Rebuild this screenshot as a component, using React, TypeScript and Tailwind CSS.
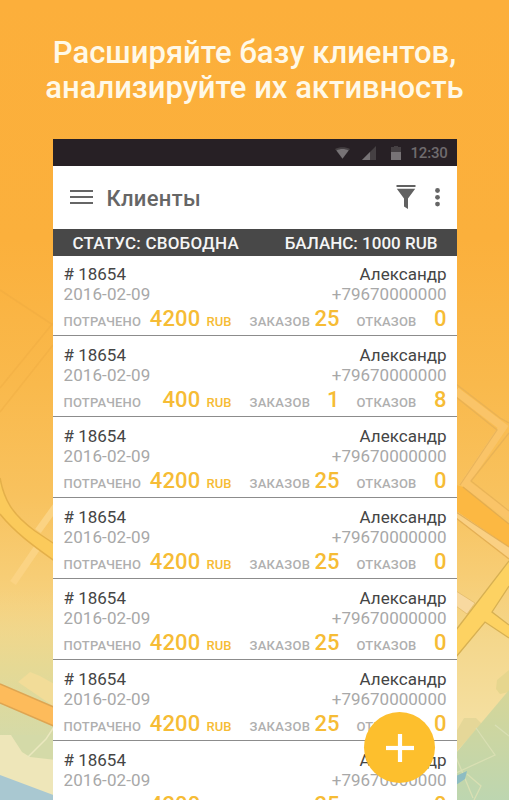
import { Plus } from 'lucide-react';

const clients = [
  { id: 1, number: '18654', date: '2016-02-09', name: 'Александр', phone: '+79670000000', spent: 4200, orders: 25, refusals: 0 },
  { id: 2, number: '18654', date: '2016-02-09', name: 'Александр', phone: '+79670000000', spent: 400, orders: 1, refusals: 8 },
  { id: 3, number: '18654', date: '2016-02-09', name: 'Александр', phone: '+79670000000', spent: 4200, orders: 25, refusals: 0 },
  { id: 4, number: '18654', date: '2016-02-09', name: 'Александр', phone: '+79670000000', spent: 4200, orders: 25, refusals: 0 },
  { id: 5, number: '18654', date: '2016-02-09', name: 'Александр', phone: '+79670000000', spent: 4200, orders: 25, refusals: 0 },
  { id: 6, number: '18654', date: '2016-02-09', name: 'Александр', phone: '+79670000000', spent: 4200, orders: 25, refusals: 0 },
  { id: 7, number: '18654', date: '2016-02-09', name: 'Александр', phone: '+79670000000', spent: 4200, orders: 25, refusals: 0 },
];

function MapBackground() {
  return (
    <svg className="absolute inset-0" width="509" height="800" viewBox="0 0 509 800" fill="none">
      <defs>
        <linearGradient id="sky" x1="0" y1="0" x2="0" y2="1">
          <stop offset="0" stopColor="#fcaf3b" />
          <stop offset="0.3" stopColor="#fbb03c" />
          <stop offset="0.48" stopColor="#f9b94c" />
          <stop offset="0.62" stopColor="#f8c25e" />
          <stop offset="0.72" stopColor="#f7cd75" />
          <stop offset="0.8" stopColor="#f4d78c" />
          <stop offset="0.9" stopColor="#f4dfa0" />
          <stop offset="1" stopColor="#f0e3b0" />
        </linearGradient>
        <linearGradient id="meadow" x1="0" y1="0" x2="0" y2="1">
          <stop offset="0" stopColor="#f3d586" stopOpacity="0" />
          <stop offset="0.5" stopColor="#e6d994" />
          <stop offset="1" stopColor="#d4daa8" />
        </linearGradient>
        <linearGradient id="park" x1="0" y1="0" x2="0" y2="1">
          <stop offset="0" stopColor="#d6d698" />
          <stop offset="1" stopColor="#bdd6b0" />
        </linearGradient>
      </defs>
      <rect width="509" height="800" fill="url(#sky)" />

      {/* left side */}
      <path d="M0 290L53 325M0 388L53 323M0 412L53 345" stroke="#e9a63e" strokeOpacity="0.3" strokeWidth="1.5" />
      <rect y="590" width="56" height="150" fill="url(#meadow)" />
      <rect y="735" width="56" height="65" fill="#d4daa8" />
      <path d="M56 506L38 531M37 548L13 583" stroke="#fbd383" strokeWidth="7" />
      <path d="M0 478C4 500 12 514 35 531L56 545V562C38 549 16 534 0 514Z" fill="#fbca5b" />
      <path d="M0 478C4 500 12 514 35 531L56 545M56 562C38 549 16 534 0 514" stroke="#e4b04a" strokeWidth="1.5" />
      <path d="M18 682L30 672L40 676L56 685V708Z" fill="#f2dc98" />
      <path d="M0 684L56 708V727L0 703Z" fill="#fdbb5b" />
      <path d="M0 684L56 708M56 727L0 703" stroke="#dea552" strokeWidth="1.5" />
      <path d="M0 735L11 735L22 752L30 757L56 760V800H0Z" fill="#eee6b9" />
      <path d="M56 724L46 739L28 757" stroke="#ebe8bf" strokeWidth="1.5" />
      <path d="M0 775L56 796V800H0Z" fill="#a9c8d1" />

      {/* right side */}
      <path d="M456 391L503 427L465 483L509 516" stroke="#fac468" strokeWidth="8" />
      <path d="M456 384L500 418L509 423M456 397L497 430L460 485M509 433L471 481L509 511" stroke="#e3ae55" strokeOpacity="0.7" strokeWidth="1.3" />
      <path d="M456 485L463 487L509 524V547L456 511Z" fill="#fcb842" />
      <path d="M456 511L509 547V558L456 518Z" fill="#fad083" />
      <path d="M463 487L509 524M456 512L509 547M456 518L509 559" stroke="#dfa94f" strokeOpacity="0.8" strokeWidth="1.3" />
      <path d="M456 591L475 603L467 614L456 606Z" fill="#f8d9a0" stroke="#e0b866" strokeOpacity="0.7" />
      <path d="M509 561L456 630V657L485 622L509 638V625L492 612L509 586Z" fill="#fdd262" />
      <path d="M509 561L456 630M456 657L485 622L509 638M509 625L492 612L509 586" stroke="#d7b052" strokeWidth="1.3" />
      <path d="M509 670L497 680L496 689L500 694L509 692Z" fill="#e6d68e" />
      <path d="M456 732L464 718H476L482 724L456 752Z" fill="#e5d798" />
      <path d="M509 690L456 753V800H509Z" fill="url(#park)" />
      <path d="M476 728L495 755L456 773M495 725L509 736M456 757L473 798M467 774L481 786L474 800" stroke="#d9dfb3" strokeWidth="1.3" />
      <path d="M456 776L467 771L465 779L456 785Z" fill="#8dbcc2" />
    </svg>
  );
}

function StatusIcons() {
  return (
    <svg width="68" height="16" viewBox="0 0 68 16">
      <path d="M1 4C5 1.5 12 1.5 16 4L8.500 14Z" fill="#454043" />
      <path d="M2.500 5.500C6 3.500 11 3.500 14.500 5.500L8.500 13.500Z" fill="#777376" />
      <path d="M28 15H42V1Z" fill="#454043" />
      <path d="M28 15H36V7Z" fill="#777376" />
      <path d="M57 2H60V1H64V2H67V15H57Z" fill="#454043" />
      <path d="M57 7H67V15H57Z" fill="#777376" />
    </svg>
  );
}

function FilterIcon() {
  return (
    <svg width="20" height="25" viewBox="0 0 20 25" fill="#616161">
      <path d="M0.500 0H19.500V2H0.500Z" />
      <path d="M0.800 3.700H19.200L12 13.500V24L8 21.500V13.500Z" />
    </svg>
  );
}

export default function App() {
  return (
    <div className="relative h-[800px] w-[509px] overflow-hidden bg-[#fcaf3b] font-['Roboto',sans-serif]">
      <MapBackground />

      <div className="relative flex h-full flex-col items-center">
        <h1 className="h-[139px] shrink-0 whitespace-nowrap pt-[36px] text-center text-[31px] font-medium leading-[34.5px] text-[#fff9e8]">
          Расширяйте базу клиентов,
          <br />
          анализируйте их активность
        </h1>

        <div className="h-[661px] w-[404px] overflow-hidden bg-white">
          <div className="flex h-[27px] items-center justify-end bg-[#272025] pr-[9px] text-[15px] text-[#6f6b6e]">
            <StatusIcons />
            <span className="ml-[9px] w-[37px] pt-px font-medium tracking-[-0.2px]">12:30</span>
          </div>

          <header className="flex h-[63px] items-center pl-[17px] pr-[17px] text-[#666666]">
            <svg width="23" height="15" viewBox="0 0 23 15" stroke="currentColor" strokeWidth="2.200">
              <path d="M0 1H23M0 7H23M0 13H23" />
            </svg>
            <span className="ml-[14px] pt-[2px] text-[22px] font-medium tracking-[0.3px]">Клиенты</span>
            <span className="-mt-px ml-auto">
              <FilterIcon />
            </span>
            <svg className="ml-[19px]" width="5" height="19" viewBox="0 0 5 19" fill="currentColor">
              <circle cx="2.500" cy="2.500" r="2.400" />
              <circle cx="2.500" cy="9.300" r="2.400" />
              <circle cx="2.500" cy="16.100" r="2.400" />
            </svg>
          </header>

          <div className="flex h-[27px] items-center justify-between bg-[#484848] pl-[20px] pr-[19px] pt-[2px] text-[17px] font-medium text-[#f5f5f5]">
            <span className="tracking-[0.2px]">СТАТУС: СВОБОДНА</span>
            <span>БАЛАНС: 1000 RUB</span>
          </div>

          <div className="-mt-px">
            {clients.map((client) => (
              <div key={client.id} className="h-[81px] border-b border-[#8c8c8c] pl-[11px] pr-[10px] pt-[9px]">
                <div className="flex h-5 justify-between text-[17px] leading-5 text-[#454545]">
                  <span># {client.number}</span>
                  <span>{client.name}</span>
                </div>
                <div className="flex h-5 justify-between text-[17px] leading-5 text-[#a8a8a8]">
                  <span className="tracking-[0.1px]">{client.date}</span>
                  <span>{client.phone}</span>
                </div>
                <div className="flex h-[30px] items-baseline whitespace-nowrap text-[13px] font-medium leading-[30px] text-[#afafaf]">
                  <span className="w-[80px] tracking-[0.2px]">ПОТРАЧЕНО</span>
                  <span className="w-[57px] text-right text-[22px] tracking-[0.2px] text-[#f6bc35]">{client.spent}</span>
                  <span className="w-[31px] text-right text-[#f6bc35]">RUB</span>
                  <span className="ml-[18px] w-[62px] tracking-[0.3px]">ЗАКАЗОВ</span>
                  <span className="w-[28px] text-right text-[22px] text-[#f6bc35]">{client.orders}</span>
                  <span className="ml-[17px] tracking-[0.2px]">ОТКАЗОВ</span>
                  <span className="ml-auto text-[22px] text-[#f6bc35]">{client.refusals}</span>
                </div>
              </div>
            ))}
          </div>
        </div>
      </div>

      <button className="absolute left-[364px] top-[712px] flex h-[71px] w-[71px] items-center justify-center rounded-full bg-[#fdbf2d] text-white">
        <Plus size={48} strokeWidth={2.1} strokeLinecap="butt" />
      </button>
    </div>
  );
}
